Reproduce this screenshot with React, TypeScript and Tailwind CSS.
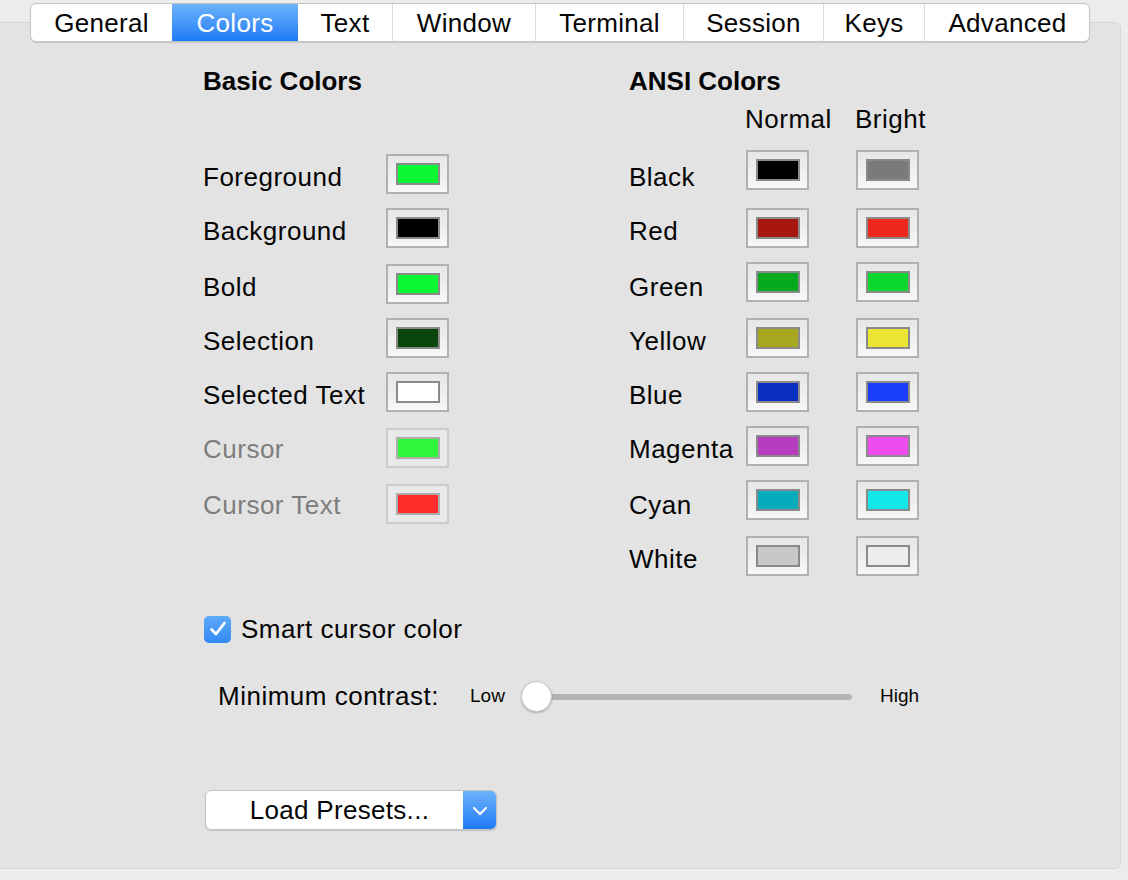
import React from "react";

type Row = { label: string; color: string; mt: string; lt: string; disabled?: boolean };

const basic: Row[] = [
  { label: "Foreground", color: "#0bf935", mt: "mt-[58px]", lt: "mt-[8px]" },
  { label: "Background", color: "#000000", mt: "mt-[14px]", lt: "mt-[8px]" },
  { label: "Bold", color: "#0bf935", mt: "mt-[16px]", lt: "mt-[8px]" },
  { label: "Selection", color: "#0a460b", mt: "mt-[14px]", lt: "mt-[8px]" },
  { label: "Selected Text", color: "#ffffff", mt: "mt-[14px]", lt: "mt-[8px]" },
  { label: "Cursor", color: "#2ff53b", mt: "mt-[16px]", lt: "mt-[6px]", disabled: true },
  { label: "Cursor Text", color: "#ff2b2b", mt: "mt-[16px]", lt: "mt-[6px]", disabled: true },
];

type Ansi = { label: string; normal: string; bright: string; mt: string; lt: string };

const ansi: Ansi[] = [
  { label: "Black", normal: "#000000", bright: "#7a7a7a", mt: "mt-[16px]", lt: "mt-[12px]" },
  { label: "Red", normal: "#a8170e", bright: "#ed291d", mt: "mt-[18px]", lt: "mt-[8px]" },
  { label: "Green", normal: "#03a91e", bright: "#0bd72f", mt: "mt-[14px]", lt: "mt-[10px]" },
  { label: "Yellow", normal: "#a8a820", bright: "#ebe434", mt: "mt-[16px]", lt: "mt-[8px]" },
  { label: "Blue", normal: "#0a2ec0", bright: "#1a3efc", mt: "mt-[14px]", lt: "mt-[8px]" },
  { label: "Magenta", normal: "#b73dbf", bright: "#ed4bef", mt: "mt-[14px]", lt: "mt-[8px]" },
  { label: "Cyan", normal: "#08abbb", bright: "#13e8e8", mt: "mt-[14px]", lt: "mt-[10px]" },
  { label: "White", normal: "#c8c8c8", bright: "#ededed", mt: "mt-[16px]", lt: "mt-[8px]" },
];

const tabs: { name: string; w: string; active?: boolean }[] = [
  { name: "General", w: "w-[141px]" },
  { name: "Colors", w: "w-[126px]", active: true },
  { name: "Text", w: "w-[94px]" },
  { name: "Window", w: "w-[143px]" },
  { name: "Terminal", w: "w-[148px]" },
  { name: "Session", w: "w-[140px]" },
  { name: "Keys", w: "w-[101px]" },
  { name: "Advanced", w: "w-[166px]" },
];

function Swatch({ color, disabled }: { color: string; disabled?: boolean }) {
  return (
    <div
      className={
        disabled
          ? "flex h-[40px] w-[63px] shrink-0 items-center justify-center border-2 border-[#cbcbcb] bg-[#e9e9e9]"
          : "flex h-[40px] w-[63px] shrink-0 items-center justify-center border-2 border-[#b1b1b1] bg-gradient-to-b from-[#e6e6e6] to-[#f7f7f7]"
      }
    >
      <div
        className={
          disabled
            ? "h-[22px] w-[44px] border-2 border-[#acacac]"
            : "h-[22px] w-[44px] border-2 border-[#8a8a8a]"
        }
        style={{ backgroundColor: color }}
      />
    </div>
  );
}

export default function App() {
  return (
    <div className="h-[880px] w-[1128px] overflow-hidden bg-[#ececec] font-['Liberation_Sans',Arial,sans-serif] text-[26px] leading-[30px] tracking-[0.5px] text-[#050505]">
      {/* Tab bar */}
      <div className="relative z-10 pl-[30px] pt-[3px]">
        <div className="flex h-[39px] w-[1060px] overflow-hidden rounded-[6px] border border-[#c3c3c3] bg-white shadow-[0_1px_1px_rgba(0,0,0,0.12)]">
          {tabs.map((t, i) => (
            <div
              key={t.name}
              className={
                (t.active
                  ? "bg-gradient-to-b from-[#6cb1fa] to-[#1a7cf6] text-white "
                  : "text-[#050505] ") +
                (i > 0 && !t.active && !tabs[i - 1].active ? "border-l border-[#dcdcdc] " : "") +
                t.w +
                " flex shrink-0 items-center justify-center tracking-[0.3px]"
              }
            >
              {t.name}
            </div>
          ))}
        </div>
      </div>

      {/* Panel */}
      <div className="-mt-[20px] mr-[7px] h-[847px] rounded-r-[6px] border border-l-0 border-[#d6d6d6] bg-[#e3e3e3] pl-[203px] pt-[43px]">
        <div className="flex">
          {/* Basic colors */}
          <div className="w-[426px] shrink-0">
            <div className="font-bold tracking-normal">Basic Colors</div>
            {basic.map((r) => (
              <div key={r.label} className={r.mt + " flex h-[40px]"}>
                <div className={(r.disabled ? "text-[#7d7d7d] " : "") + r.lt + " w-[183px] shrink-0"}>{r.label}</div>
                <Swatch color={r.color} disabled={r.disabled} />
              </div>
            ))}
          </div>

          {/* ANSI colors */}
          <div>
            <div className="font-bold tracking-normal">ANSI Colors</div>
            <div className="mt-[8px] flex">
              <div className="w-[116px] shrink-0" />
              <div className="w-[110px] shrink-0">Normal</div>
              <div>Bright</div>
            </div>
            {ansi.map((r) => (
              <div key={r.label} className={r.mt + " flex h-[40px]"}>
                <div className={r.lt + " w-[117px] shrink-0"}>{r.label}</div>
                <Swatch color={r.normal} />
                <div className="w-[47px] shrink-0" />
                <Swatch color={r.bright} />
              </div>
            ))}
          </div>
        </div>

        {/* Smart cursor */}
        <div className="ml-[1px] mt-[38px] flex h-[30px] items-center">
          <div className="flex h-[27px] w-[27px] items-center justify-center rounded-[5px] bg-gradient-to-b from-[#5ea9f8] to-[#3089f5]">
            <svg width="20" height="18" viewBox="0 0 20 18" fill="none">
              <path d="M3.5 9.5 L8 14 L16.5 3" stroke="white" strokeWidth="2.8" strokeLinecap="round" strokeLinejoin="round" />
            </svg>
          </div>
          <span className="ml-[10px]">Smart cursor color</span>
        </div>

        {/* Minimum contrast */}
        <div className="ml-[15px] mt-[36px] flex h-[32px] items-center">
          <div className="w-[252px] shrink-0">Minimum contrast:</div>
          <div className="w-[51px] shrink-0 text-[19px] tracking-normal">Low</div>
          <div className="relative h-[31px] w-[331px] shrink-0">
            <div className="absolute left-[15px] top-[13px] h-[6px] w-[316px] rounded-full bg-[#b3b3b3]" />
            <div className="absolute left-0 top-0 h-[31px] w-[31px] rounded-full border border-[#c8c8c8] bg-white shadow-[0_1px_2px_rgba(0,0,0,0.25)]" />
          </div>
          <div className="ml-[28px] text-[19px] tracking-normal">High</div>
        </div>

        {/* Load presets */}
        <div className="ml-[2px] mt-[78px] flex h-[40px] w-[292px] overflow-hidden rounded-[6px] border border-[#c3c3c3] bg-white shadow-[0_1px_1px_rgba(0,0,0,0.15)]">
          <div className="flex flex-1 items-center justify-center pl-[10px] tracking-[0.3px]">Load Presets...</div>
          <div className="flex w-[33px] items-center justify-center bg-gradient-to-b from-[#6cb1fa] to-[#1a7cf6]">
            <svg width="16" height="11" viewBox="0 0 16 11" fill="none">
              <path d="M2 3 L8 9 L14 3" stroke="white" strokeWidth="2.2" strokeLinecap="round" strokeLinejoin="round" />
            </svg>
          </div>
        </div>
      </div>
    </div>
  );
}
